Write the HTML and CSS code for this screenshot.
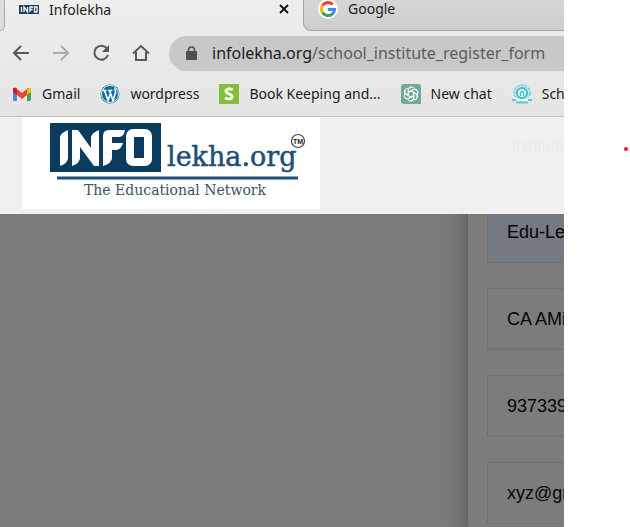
FILE: index.html
```html
<!DOCTYPE html>
<html lang="en">
<head>
<meta charset="utf-8">
<title>Infolekha</title>
<link rel="stylesheet" href="styles.css">
</head>
<body>
<div class="browser">
  <nav class="tabs" aria-label="Tabs">
    <span class="tab-edge"></span>
    <div class="tab tab-active">
      <svg class="tab-logo" viewBox="0 0 20 9" aria-hidden="true"><rect width="20" height="9" fill="#1c4160"/><path d="M2.500 2v5M5 7V2l3.500 5V2M11 7V2h3M11 4.500h2.500M15.500 2h2.500v5h-2.500z" fill="none" stroke="#fff" stroke-width="1.300"/></svg>
      <span class="tab-title">Infolekha</span>
      <button class="close" aria-label="Close tab"><svg viewBox="0 0 10 10"><path d="M1 1l8 8M9 1L1 9" stroke="#111" stroke-width="1.800"/></svg></button>
    </div>
    <div class="tab tab-idle">
      <svg class="google" viewBox="0 0 20 20" aria-hidden="true"><circle cx="10" cy="10" r="10" fill="#fff"/><g fill="none" stroke-width="3"><path d="M4.500 6.500A6.500 6.500 0 0 1 14.700 5.400" stroke="#ea4335"/><path d="M4.500 6.500a6.500 6.500 0 0 0 0 7" stroke="#fbbc05"/><path d="M4.500 13.500a6.500 6.500 0 0 0 9.800 1.500" stroke="#34a853"/><path d="M14.300 15a6.500 6.500 0 0 0 2.200-4.500H10" stroke="#4285f4"/></g></svg>
      <span class="tab-title">Google</span>
    </div>
  </nav>
  <div class="toolbar">
    <button class="tool" aria-label="Back"><svg viewBox="0 0 18 18"><path d="M17 9H2M9 2L2 9l7 7" fill="none" stroke="#55585c" stroke-width="2"/></svg></button>
    <button class="tool" aria-label="Forward"><svg viewBox="0 0 18 18"><path d="M1 9h15M9 2l7 7-7 7" fill="none" stroke="#a9abad" stroke-width="2"/></svg></button>
    <button class="tool" aria-label="Reload"><svg viewBox="0 0 18 18"><path d="M15 4.500A7 7 0 1 0 16 11" fill="none" stroke="#55585c" stroke-width="2"/><path d="M17 1v7h-7z" fill="#55585c"/></svg></button>
    <button class="tool" aria-label="Home"><svg viewBox="0 0 18 18"><path d="M1 9.500L9 2l8 7.500M4 8v8h10V8" fill="none" stroke="#55585c" stroke-width="2"/></svg></button>
    <div class="address">
      <svg class="lock" viewBox="0 0 11 15" aria-hidden="true"><path d="M2.500 6V4a3 3 0 0 1 6 0v2" fill="none" stroke="#4c4f53" stroke-width="1.600"/><rect y="5" width="11" height="9" rx="1" fill="#4c4f53"/></svg>
      <span class="url">infolekha.org<span class="path">/school_institute_register_form</span></span>
    </div>
  </div>
  <nav class="bookmarks" aria-label="Bookmarks">
    <a href="#"><svg viewBox="0 0 20 20"><path d="M1 4h4v13H2l-1-1z" fill="#4285f4"/><path d="M15 4h4v12l-1 1h-3z" fill="#34a853"/><path d="M15 5l2-1.500 2 1V8l-4 3z" fill="#fbbc04"/><path d="M1 8V4.500L3 3.500l7 5.500 5-4v6l-5 4-5-4z" fill="#ea4335"/><path d="M1 4.500l2-1 2 1.500v6L1 8z" fill="#c5221f"/></svg>Gmail</a>
    <a href="#"><svg viewBox="0 0 20 20"><circle cx="10" cy="10" r="9.500" fill="#0c6c9c"/><circle cx="10" cy="10" r="8.500" fill="none" stroke="#e8f1f5"/><path d="M2.500 6.500h4M8 6.500h4.500M4.500 6.500l3.500 10 2.500-7M9.500 6.500l3.500 10 2.500-8q.5-2-1-4" fill="none" stroke="#fff" stroke-width="1.700"/></svg>wordpress</a>
    <a href="#"><svg viewBox="0 0 20 20"><path fill="#86bc37" d="M0 0h20v20H0z"/><path d="M13.800 5.800C11.500 4.500 7 4.500 7 7.300c0 3 6.300 2.300 6.300 5.200 0 2.800-4.500 2.800-7.300 1.500" fill="none" stroke="#fff" stroke-width="2.800"/></svg>Book Keeping and...</a>
    <a href="#"><svg viewBox="0 0 20 20"><path d="M3 0h14a3 3 0 0 1 3 3v17H3a3 3 0 0 1-3-3V3a3 3 0 0 1 3-3z" fill="#72a899"/><g fill="none" stroke="#fff" stroke-width="1"><path id="petal" d="M7.300 12V6a3.200 3.200 0 0 1 6-1.500M7.300 8.400l4.700-2.700a3 3 0 0 1 4 1"/><use href="#petal" transform="rotate(60 10 10)"/><use href="#petal" transform="rotate(120 10 10)"/><use href="#petal" transform="rotate(180 10 10)"/><use href="#petal" transform="rotate(240 10 10)"/><use href="#petal" transform="rotate(300 10 10)"/></g></svg>New chat</a>
    <a href="#"><svg viewBox="0 0 20 20"><circle cx="10" cy="9" r="8" fill="#bfe6ea" stroke="#7fd0d8" stroke-width="1.500" stroke-dasharray="3 1"/><circle cx="10" cy="9" r="5" fill="#e2f4f5" stroke="#45b9c5" stroke-width="2"/><path d="M8.500 12V8.500L10 7l1.500 1.500V12" fill="none" stroke="#45b9c5" stroke-width="1.200"/><path d="M1 13l4 3h10l4-3" fill="none" stroke="#e9f6f7" stroke-width="2"/><path d="M0 16h4M16 16h4M4 18.500h12" fill="none" stroke="#68c5cf" stroke-width="2"/></svg>Sch</a>
  </nav>
  <main class="page">
    <header class="site-header">
      <a class="brand" href="#" aria-label="Infolekha home">
        <svg viewBox="0 0 298 92">
          <rect x="28" y="6" width="111" height="49" fill="#0b3c5d"/>
          <path d="M38 49V21q0-5 8-8v28q0 5-8 8zM50 49V13h6l13 18V21q0-5 8-8v36h-5L58 30v11q0 5-8 8zM81 49V19q0-6 6-6h16q-1 7-6 7h-7v6h11q-2 7-7 7h-4v8q0 5-9 8z" fill="#fff"/>
          <rect x="108" y="16" width="18" height="29" rx="3" fill="none" stroke="#fff" stroke-width="8"/>
          <text class="word" x="145" y="49">lekha.org</text>
          <path d="M35 61h241" class="rule"/>
          <text class="motto" x="62" y="78">The Educational Network</text>
          <circle cx="276" cy="24" r="6.500" fill="none" stroke="#444" stroke-width="1.200"/>
          <text class="tm" x="276" y="27">TM</text>
        </svg>
      </a>
    </header>
    <form class="card">
      <label class="caption" for="institute">Institution</label>
      <input class="field filled" id="institute" value="Edu-Lekha">
      <input class="field" aria-label="Name" value="CA AMit">
      <input class="field" aria-label="Phone" value="9373390000">
      <input class="field" aria-label="Email" value="xyz@gmail.com">
    </form>
  </main>
</div>
<aside class="margin"><span class="dot"></span></aside>
</body>
</html>
```
FILE: styles.css
```css
* { box-sizing: border-box; }
body {
  margin: 0;
  display: flex;
  height: 100vh;
  overflow: hidden;
  background: #fff;
  font-family: "Noto Sans", sans-serif;
  font-size: 14px;
  color: #1b1b1b;
}
button { border: 0; padding: 0; background: none; }
svg { display: block; flex: none; }
.browser {
  flex: 1;
  min-width: 0;
  display: flex;
  flex-direction: column;
  overflow: hidden;
  background: linear-gradient(#eeeeee, #e4e4e4 117px);
}
.margin { flex: 0 0 66px; display: flex; justify-content: flex-end; padding: 147px 2px 0 0; }
.dot { width: 4px; height: 4px; border-radius: 50%; background: #e8191c; }

.tabs { display: flex; height: 31px; }
.tab-edge { width: 5px; border: solid #aaa; border-width: 0 1px 1px 0; border-bottom-right-radius: 8px; background: #ddd; }
.tab { display: flex; align-items: center; padding-bottom: 13px; }
.tab-active { width: 298px; padding-left: 14px; padding-right: 14px; }
.tab-logo { width: 20px; height: 9px; margin-right: 10px; }
.close { margin-left: auto; }
.close svg { width: 10px; height: 10px; }
.tab-idle {
  flex: 1;
  padding-left: 14px;
  border: solid #a4a4a4;
  border-width: 0 0 1px 1px;
  border-bottom-left-radius: 8px;
  background: linear-gradient(#d6d6d6, #cecece);
}
.google { width: 20px; height: 20px; margin-right: 10px; }

.toolbar { display: flex; align-items: center; height: 44px; padding-left: 12px; gap: 22px; }
.tool svg { width: 18px; height: 18px; }
.address {
  flex: 1;
  min-width: 0;
  display: flex;
  align-items: center;
  height: 35px;
  margin-left: -3px;
  padding-left: 17px;
  border-radius: 18px 0 0 18px;
  background: #c8c8c8;
  font-size: 16px;
  white-space: nowrap;
}
.lock { width: 11px; height: 15px; margin-right: 15px; }
.path { color: #5c5c5c; }

.bookmarks { display: flex; align-items: center; height: 42px; padding: 0 0 4px 12px; gap: 20px; border-bottom: 1px solid #c4c4c4; white-space: nowrap; }
.bookmarks a { display: flex; align-items: center; gap: 10px; color: inherit; text-decoration: none; }
.bookmarks svg { width: 20px; height: 20px; }

.page { flex: 1; position: relative; min-height: 0; overflow: hidden; background: #7c7c7c; }
.site-header { position: absolute; inset: 0 0 auto 0; z-index: 1; height: 97px; padding-left: 22px; background: rgba(248, 248, 248, 0.94); }
.brand { display: block; width: 298px; background: #fff; }
.word { font: 27px "Roboto Slab", "DejaVu Serif", serif; fill: #1d4f76; stroke: #1d4f76; stroke-width: 0.5; }
.motto { font: 14px "Roboto Slab", "DejaVu Serif", serif; fill: #3b5362; }
.tm { font: bold 7px "Liberation Sans", sans-serif; text-anchor: middle; fill: #222; }
.rule { stroke: #1d4f76; stroke-width: 3; }

.card {
  display: flex;
  flex-direction: column;
  gap: 25px;
  width: 600px;
  margin-left: 468px;
  padding: 18px 19px;
  min-height: 100%;
  background: #7c7c7c;
  box-shadow: 0 0 24px rgba(0, 0, 0, 0.35);
  font-family: "Liberation Sans", sans-serif;
}
.caption { height: 41px; padding-left: 25px; font-size: 16px; line-height: 22px; color: #000; }
.field {
  flex: none;
  height: 62px;
  padding: 0 19px;
  border: 1px solid #707070;
  border-radius: 0;
  background: #7c7c7c;
  font: 18px "Liberation Sans", sans-serif;
  color: #050505;
}
.filled { background: #747982; }
```
